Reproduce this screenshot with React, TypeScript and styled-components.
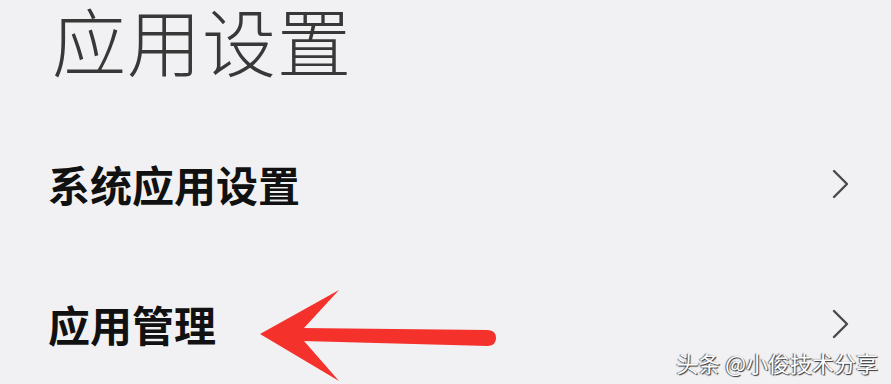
import React from "react";
import styled, { createGlobalStyle } from "styled-components";

const GlobalStyle = createGlobalStyle`
  html, body {
    margin: 0;
    padding: 0;
    background: #f1f1f3;
  }
  body {
    font-family: "Noto Sans CJK SC", "Noto Sans", sans-serif;
  }
`;

const rows = [
  { id: "system", label: "系统应用设置" },
  { id: "manage", label: "应用管理", pointed: true },
];

const Chevron = () => (
  <svg width="20" height="32" viewBox="0 0 20 32" fill="none">
    <path
      d="M3 3 L16 16 L3 29"
      stroke="#4a4a4a"
      strokeWidth="2.4"
      strokeLinecap="round"
      strokeLinejoin="round"
    />
  </svg>
);

const RedArrow = () => (
  <svg width="240" height="94" viewBox="0 0 240 94" fill="none">
    <path d="M0 44 L79 0 L44 38 L44 51 L79 91 Z" fill="#f5312c" />
    <path
      d="M42 38 L228 40 Q236 40.5 236 48 Q236 55.5 228 56 L42 51 Z"
      fill="#f5312c"
    />
  </svg>
);

const App = () => {
  return (
    <>
      <GlobalStyle />
      <Page>
        <Title>应用设置</Title>
        <List>
          {rows.map((row) => (
            <Row key={row.id}>
              <Label>
                {row.label}
                {row.pointed && (
                  <Pointer>
                    <RedArrow />
                  </Pointer>
                )}
              </Label>
              <Chevron />
            </Row>
          ))}
        </List>
        <Watermark>头条 @小俊技术分享</Watermark>
      </Page>
    </>
  );
};

export default App;

const Page = styled.main`
  position: relative;
  width: 891px;
  height: 384px;
  overflow: hidden;
  padding: 0 40px 0 48px;
  box-sizing: border-box;
`;

const Title = styled.h1`
  margin: 0;
  padding: 0 0 0 4px;
  font-size: 74px;
  font-weight: 300;
  line-height: 78px;
  letter-spacing: 1px;
  color: #383838;
`;

const List = styled.div`
  display: flex;
  flex-direction: column;
  margin-top: 84px;
  gap: 96px;
`;

const Row = styled.div`
  display: flex;
  align-items: center;
  justify-content: space-between;
  height: 44px;
`;

const Label = styled.div`
  position: relative;
  font-size: 42px;
  font-weight: 700;
  line-height: 44px;
  color: #111;
`;

const Pointer = styled.div`
  position: absolute;
  left: 212px;
  top: -12px;
`;

const Watermark = styled.div`
  position: absolute;
  right: 13px;
  bottom: 8px;
  font-size: 22px;
  line-height: 28px;
  color: #fff;
  text-shadow: 1px 1px 1px #333, -1px 0 1px #555;
`;
